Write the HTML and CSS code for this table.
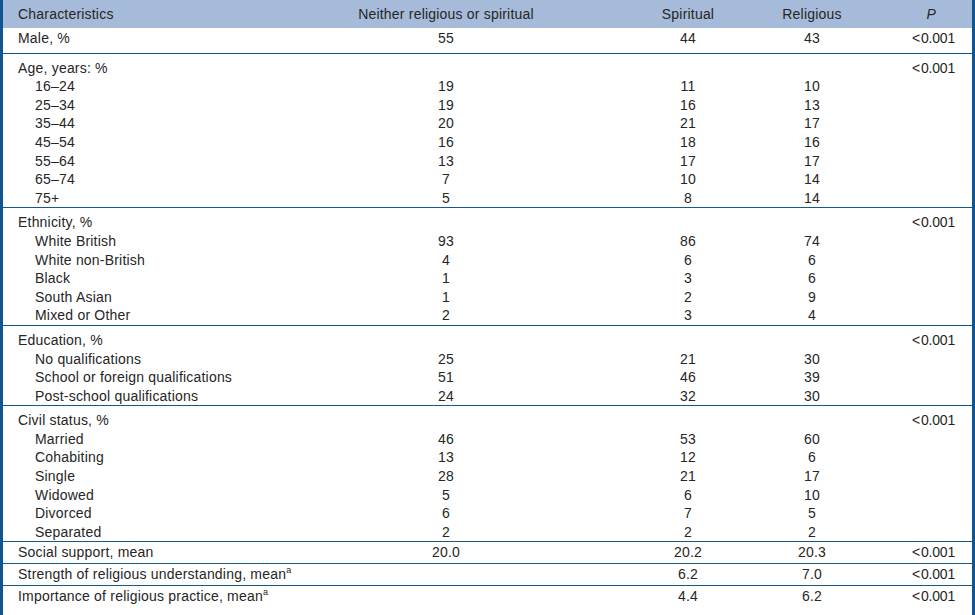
FILE: index.html
```html
<!DOCTYPE html>
<html lang="en">
<head>
<meta charset="utf-8">
<title>Characteristics table</title>
<link rel="stylesheet" href="styles.css">
</head>
<body>
<div class="frame">
<table class="data">
<colgroup>
<col class="c1"><col class="c2"><col class="c3"><col class="c4"><col class="c5">
</colgroup>
<thead>
<tr><th class="lab">Characteristics</th><th>Neither religious or spiritual</th><th class="sp">Spiritual</th><th>Religious</th><th class="p"><i>P</i></th></tr>
</thead>
<tbody class="single first">
<tr><td class="lab">Male, %</td><td>55</td><td class="sp">44</td><td>43</td><td class="pv">&lt;&#8202;0.001</td></tr>
</tbody>
<tbody class="group">
<tr><td class="lab">Age, years: %</td><td></td><td class="sp"></td><td></td><td class="pv">&lt;&#8202;0.001</td></tr>
<tr><td class="sub">16–24</td><td>19</td><td class="sp">11</td><td>10</td><td class="pv"></td></tr>
<tr><td class="sub">25–34</td><td>19</td><td class="sp">16</td><td>13</td><td class="pv"></td></tr>
<tr><td class="sub">35–44</td><td>20</td><td class="sp">21</td><td>17</td><td class="pv"></td></tr>
<tr><td class="sub">45–54</td><td>16</td><td class="sp">18</td><td>16</td><td class="pv"></td></tr>
<tr><td class="sub">55–64</td><td>13</td><td class="sp">17</td><td>17</td><td class="pv"></td></tr>
<tr><td class="sub">65–74</td><td>7</td><td class="sp">10</td><td>14</td><td class="pv"></td></tr>
<tr><td class="sub">75+</td><td>5</td><td class="sp">8</td><td>14</td><td class="pv"></td></tr>
</tbody>
<tbody class="group">
<tr><td class="lab">Ethnicity, %</td><td></td><td class="sp"></td><td></td><td class="pv">&lt;&#8202;0.001</td></tr>
<tr><td class="sub">White British</td><td>93</td><td class="sp">86</td><td>74</td><td class="pv"></td></tr>
<tr><td class="sub">White non-British</td><td>4</td><td class="sp">6</td><td>6</td><td class="pv"></td></tr>
<tr><td class="sub">Black</td><td>1</td><td class="sp">3</td><td>6</td><td class="pv"></td></tr>
<tr><td class="sub">South Asian</td><td>1</td><td class="sp">2</td><td>9</td><td class="pv"></td></tr>
<tr><td class="sub">Mixed or Other</td><td>2</td><td class="sp">3</td><td>4</td><td class="pv"></td></tr>
</tbody>
<tbody class="group">
<tr><td class="lab">Education, %</td><td></td><td class="sp"></td><td></td><td class="pv">&lt;&#8202;0.001</td></tr>
<tr><td class="sub">No qualifications</td><td>25</td><td class="sp">21</td><td>30</td><td class="pv"></td></tr>
<tr><td class="sub">School or foreign qualifications</td><td>51</td><td class="sp">46</td><td>39</td><td class="pv"></td></tr>
<tr><td class="sub">Post-school qualifications</td><td>24</td><td class="sp">32</td><td>30</td><td class="pv"></td></tr>
</tbody>
<tbody class="group">
<tr><td class="lab">Civil status, %</td><td></td><td class="sp"></td><td></td><td class="pv">&lt;&#8202;0.001</td></tr>
<tr><td class="sub">Married</td><td>46</td><td class="sp">53</td><td>60</td><td class="pv"></td></tr>
<tr><td class="sub">Cohabiting</td><td>13</td><td class="sp">12</td><td>6</td><td class="pv"></td></tr>
<tr><td class="sub">Single</td><td>28</td><td class="sp">21</td><td>17</td><td class="pv"></td></tr>
<tr><td class="sub">Widowed</td><td>5</td><td class="sp">6</td><td>10</td><td class="pv"></td></tr>
<tr><td class="sub">Divorced</td><td>6</td><td class="sp">7</td><td>5</td><td class="pv"></td></tr>
<tr><td class="sub">Separated</td><td>2</td><td class="sp">2</td><td>2</td><td class="pv"></td></tr>
</tbody>
<tbody class="single">
<tr><td class="lab">Social support, mean</td><td>20.0</td><td class="sp">20.2</td><td>20.3</td><td class="pv">&lt;&#8202;0.001</td></tr>
</tbody>
<tbody class="single">
<tr><td class="lab">Strength of religious understanding, mean<sup>a</sup></td><td></td><td class="sp">6.2</td><td>7.0</td><td class="pv">&lt;&#8202;0.001</td></tr>
</tbody>
<tbody class="single">
<tr><td class="lab">Importance of religious practice, mean<sup>a</sup></td><td></td><td class="sp">4.4</td><td>6.2</td><td class="pv">&lt;&#8202;0.001</td></tr>
</tbody>
</table>
</div>
</body>
</html>
```
FILE: styles.css
```css
html, body {
  margin: 0;
  padding: 0;
  background: #ffffff;
}
.frame {
  width: 975px;
  box-sizing: border-box;
  border-left: 3px solid #0f5592;
  border-right: 3px solid #0f5592;
  min-height: 615px;
}
.data {
  width: 969px;
  border-collapse: collapse;
  table-layout: fixed;
  font-family: "Liberation Sans", Arial, sans-serif;
  font-size: 14px;
  letter-spacing: 0.2px;
  color: #262626;
}
.c1 { width: 333px; }
.c2 { width: 220px; }
.c3 { width: 204px; }
.c4 { width: 104px; }
.c5 { width: 108px; }
.data th {
  background: #a6bbd9;
  font-weight: normal;
  height: 28px;
  padding: 0;
  text-align: center;
  line-height: 28px;
}
.data td {
  padding: 0;
  line-height: 18.6px;
  text-align: center;
  white-space: nowrap;
}
.data th.lab, .data td.lab {
  text-align: left;
  padding-left: 15px;
}
.data td.sub {
  text-align: left;
  padding-left: 32px;
}
.data .sp {
  padding-left: 60px;
}
.data th.p {
  text-align: right;
  padding-right: 36px;
}
.data td.pv {
  text-align: right;
  padding-right: 17px;
  letter-spacing: -0.2px;
}
.data tbody {
  border-top: 1px solid #14588f;
}
.data tbody.first {
  border-top: none;
}
.data tbody.group tr:first-child td {
  padding-top: 5px;
}
.data tbody.single td {
  padding-top: 1px;
  padding-bottom: 1.4px;
}
.data tbody.first td {
  padding-top: 1px;
  padding-bottom: 5px;
}
.data sup {
  font-size: 9px;
  line-height: 0;
  vertical-align: 6px;
  letter-spacing: 0;
}
```
